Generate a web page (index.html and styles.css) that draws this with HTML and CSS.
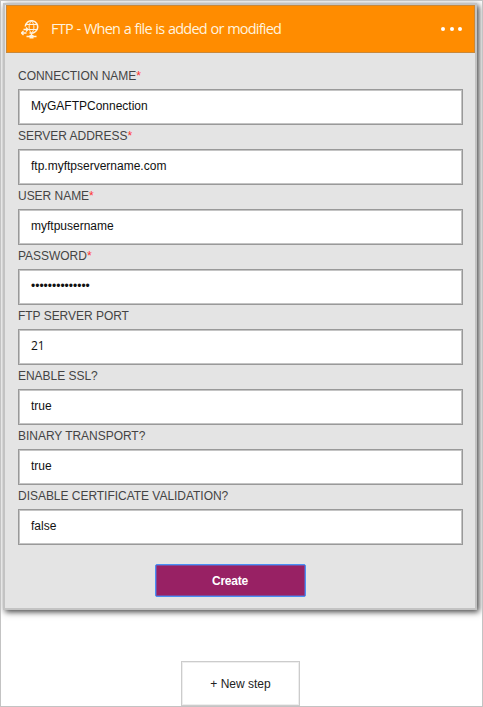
FILE: index.html
```html
<!DOCTYPE html>
<html lang="en">
<head>
<meta charset="utf-8">
<title>FTP connection</title>
<link rel="stylesheet" href="styles.css">
</head>
<body>
<main class="canvas">
  <section class="card">
    <header class="card-header">
      <svg class="icon" viewBox="0 0 20 20" width="20" height="20" fill="none" stroke="#fff3df">
        <path d="M4.300 6.500A6.200 6.200 0 1 1 8.500 12.800" stroke-width="1.500"/>
        <path d="M10.500 .900C7.300 4 7.300 10 10.500 13.300M10.500 .900c3.200 3.100 3.200 9.300 0 12.400M5 4.500h11M5.500 9.500h11" stroke-width="1"/>
        <path d="M10.500 13.500v2.500M5.500 16.500h10" stroke-width="1.500"/>
        <path d="M8.500 15h4v3.500h-4z" fill="#fff3df" stroke="none"/>
        <path d="M2.500 9.500h4M5 7.500l2 2-2 2M5.500 13H1M2.500 11l-2 2 2 2" stroke-width="1.300"/>
      </svg>
      <h1 class="title">FTP - When a file is added or modified</h1>
      <span class="more"><i></i><i></i><i></i></span>
    </header>
    <form class="form">
      <label class="field"><span class="label">CONNECTION NAME<b>*</b></span><span class="box">MyGAFTPConnection</span></label>
      <label class="field"><span class="label">SERVER ADDRESS<b>*</b></span><span class="box">ftp.myftpservername.com</span></label>
      <label class="field"><span class="label">USER NAME<b>*</b></span><span class="box">myftpusername</span></label>
      <label class="field"><span class="label">PASSWORD<b>*</b></span><span class="box">••••••••••••••</span></label>
      <label class="field"><span class="label">FTP SERVER PORT</span><span class="box number">21</span></label>
      <label class="field"><span class="label">ENABLE SSL?</span><span class="box">true</span></label>
      <label class="field"><span class="label">BINARY TRANSPORT?</span><span class="box">true</span></label>
      <label class="field"><span class="label">DISABLE CERTIFICATE VALIDATION?</span><span class="box">false</span></label>
      <button class="create" type="button">Create</button>
    </form>
  </section>
  <button class="new-step" type="button">+ New step</button>
</main>
</body>
</html>
```
FILE: styles.css
```css
* { box-sizing: border-box; }
body {
  margin: 0;
  font-family: "Liberation Sans", Arial, sans-serif;
  font-size: 12px;
  color: #111;
  background: #fff;
}
.canvas {
  width: 483px;
  height: 707px;
  border: 1px solid #c3c3c3;
  padding: 2px 5px 0 2px;
  overflow: hidden;
}
.card {
  height: 607px;
  width: 474px;
  border: 2px solid #c3c3c3;
  background: #e4e4e4;
  box-shadow: 2px 2px 6px rgba(0, 0, 0, .75);
}
.card-header {
  height: 48px;
  display: flex;
  align-items: center;
  margin-left: 1px;
  padding: 0 12px 0 14px;
  background: #ff8c00;
  border: 1px solid #c98839;
}
.icon { flex: none; margin-top: 1px; }
.title {
  margin: 0 0 0 10px;
  font: 400 14.5px/20px "Open Sans", "Noto Sans", sans-serif;
  letter-spacing: -.78px;
  word-spacing: .6px;
  color: #fff3df;
  white-space: nowrap;
}
.more { display: flex; gap: 4.5px; margin-left: auto; }
.more i { width: 4px; height: 4px; border-radius: 50%; background: #fff; }
.form { padding: 13px 12px 0 13px; }
.field { display: block; height: 60px; }
.label {
  display: block;
  height: 23px;
  line-height: 20px;
  color: #444;
  letter-spacing: -.03px;
  white-space: nowrap;
}
.label b { color: #f33; font-weight: 400; }
.box {
  display: block;
  height: 36px;
  padding-left: 12px;
  border: 1px solid #999;
  box-shadow: inset 0 0 0 1px #c4c4c4;
  background: #fff;
  line-height: 32px;
}
.number { font-family: "Open Sans", "Noto Sans", sans-serif; }
.create {
  display: block;
  width: 151px;
  height: 33px;
  margin: 18px 0 0 137px;
  padding: 0 1px 0 0;
  border: 1px solid #4a90f7;
  border-radius: 2px;
  box-shadow: inset 0 0 0 1px rgba(74, 144, 247, .4);
  background: #982164;
  color: #fff;
  font: 700 12px "Liberation Sans", Arial, sans-serif;
  letter-spacing: -.2px;
}
.new-step {
  display: block;
  width: 119px;
  height: 45px;
  margin: 51px 0 0 178px;
  padding: 1px 0 0;
  border: 1px solid #ccc;
  box-shadow: inset 0 0 0 1px #eee;
  background: #fff;
  color: #222;
  font: 12px "Liberation Sans", Arial, sans-serif;
}
```
